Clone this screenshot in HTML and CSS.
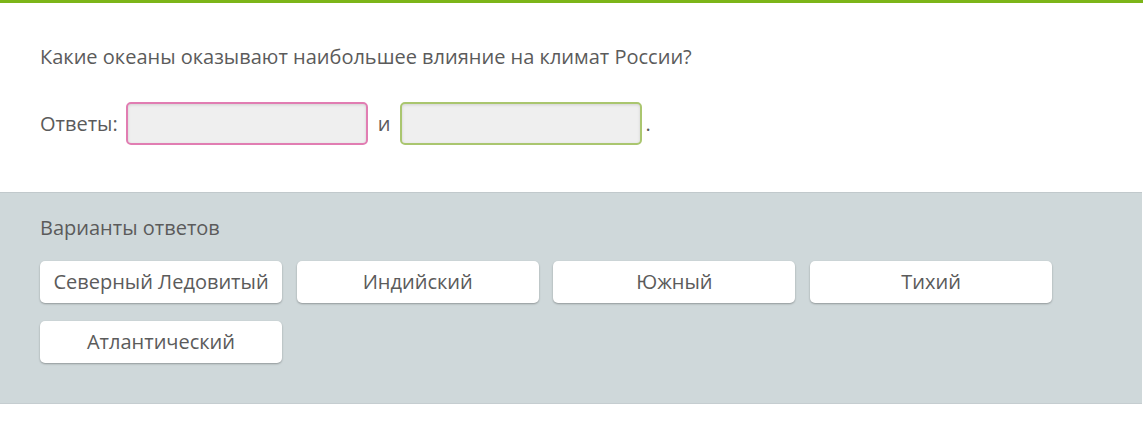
FILE: index.html
```html
<!DOCTYPE html>
<html>
<head>
<meta charset="utf-8">
<link rel="stylesheet" href="styles.css">
</head>
<body>
    <div class="topline"></div>

    <div class="task">
        <p class="question">Какие океаны оказывают наибольшее влияние на климат России?</p>

        <div class="answers">
            <span class="label">Ответы:</span>
            <div class="slot slot-pink"></div>
            <span>и</span>
            <div class="slot slot-green"></div>
            <span class="dot">.</span>
        </div>
    </div>

    <div class="options">
        <div class="options-title">Варианты ответов</div>
        <div class="options-grid">
            <div class="option">Северный Ледовитый</div>
            <div class="option">Индийский</div>
            <div class="option">Южный</div>
            <div class="option">Тихий</div>
            <div class="option">Атлантический</div>
        </div>
    </div>
</body>
</html>
```

FILE: styles.css
```css
html
{
    margin: 0;
    padding: 0;
    background: #fff;
}

body
{
    margin: 0;
    font-family: "Open Sans", "Liberation Sans", sans-serif;
    font-size: 20px;
    line-height: 24px;
    color: #5b5b5b;
}

.topline
{
    height: 3px;
    background: #7cb518;
}

.task
{
    padding: 42px 40px 47px 40px;
}

.question
{
    margin: 0 0 33px 0;
}

.answers
{
    display: flex;
    align-items: center;
    gap: 10px;
}

.answers .label
{
    margin-right: -2px;
}

.answers .dot
{
    margin-left: -7px;
}

.slot
{
    width: 238px;
    height: 39px;
    border: 2px solid #ccc;
    border-radius: 5px;
    background: #efefef;
    box-shadow: inset 0 1px 3px rgba(0, 0, 0, 0.12);
}

.slot-pink
{
    border-color: #e17db2;
}

.slot-green
{
    border-color: #aac66f;
}

.options
{
    margin-right: 1px;
    padding: 23px 40px 40px 40px;
    background: #cfd8da;
    border-top: 1px solid #c1c9cc;
    border-bottom: 1px solid #c5cdd0;
}

.options-title
{
    margin-bottom: 21px;
}

.options-grid
{
    display: grid;
    grid-template-columns: repeat(4, 242px);
    column-gap: 14.7px;
    row-gap: 18px;
}

.option
{
    height: 42px;
    display: flex;
    align-items: center;
    justify-content: center;
    background: #fff;
    border-radius: 5px;
    box-shadow: 0 1px 2px rgba(0, 0, 0, 0.3);
}
```
